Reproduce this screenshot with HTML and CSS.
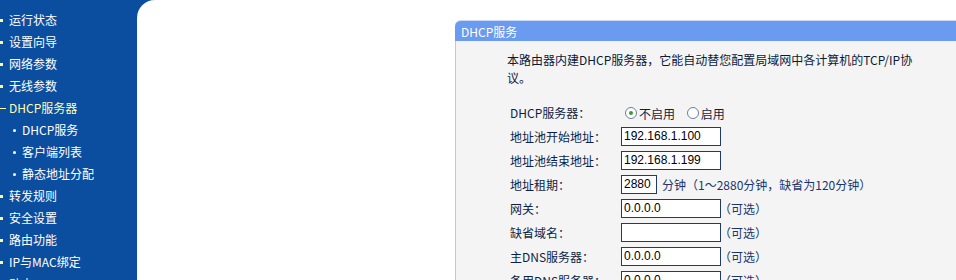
FILE: index.html
```html
<!DOCTYPE html>
<html lang="zh-CN">
<head>
  <meta charset="UTF-8">
  <title>DHCP服务</title>
  <link rel="stylesheet" href="styles.css">
</head>
<body>
  <div class="layout">
    <ul class="menu">
      <li class="item">运行状态</li>
      <li class="item">设置向导</li>
      <li class="item">网络参数</li>
      <li class="item">无线参数</li>
      <li class="item open">DHCP服务器</li>
      <li class="sub">DHCP服务</li>
      <li class="sub">客户端列表</li>
      <li class="sub">静态地址分配</li>
      <li class="item">转发规则</li>
      <li class="item">安全设置</li>
      <li class="item">路由功能</li>
      <li class="item">IP与MAC绑定</li>
      <li class="item">动态DNS</li>
    </ul>

    <div class="main">
      <div class="panel">
        <div class="panel-head">DHCP服务</div>
        <div class="panel-body">
          <p class="intro">本路由器内建DHCP服务器，它能自动替您配置局域网中各计算机的TCP/IP协<br>议。</p>
          <table class="form">
            <tr>
              <td class="label">DHCP服务器：</td>
              <td>
                <span class="radio checked"></span><span class="opt">不启用</span>
                <span class="radio"></span><span class="opt">启用</span>
              </td>
            </tr>
            <tr>
              <td class="label">地址池开始地址：</td>
              <td><span class="field">192.168.1.100</span></td>
            </tr>
            <tr>
              <td class="label">地址池结束地址：</td>
              <td><span class="field">192.168.1.199</span></td>
            </tr>
            <tr>
              <td class="label">地址租期：</td>
              <td><span class="field short">2880</span><span class="hint wide">分钟（1～2880分钟，缺省为120分钟）</span></td>
            </tr>
            <tr>
              <td class="label">网关：</td>
              <td><span class="field">0.0.0.0</span><span class="hint">（可选）</span></td>
            </tr>
            <tr>
              <td class="label">缺省域名：</td>
              <td><span class="field"></span><span class="hint">（可选）</span></td>
            </tr>
            <tr>
              <td class="label">主DNS服务器：</td>
              <td><span class="field">0.0.0.0</span><span class="hint">（可选）</span></td>
            </tr>
            <tr>
              <td class="label">备用DNS服务器：</td>
              <td><span class="field">0.0.0.0</span><span class="hint">（可选）</span></td>
            </tr>
          </table>
        </div>
      </div>
    </div>
  </div>
</body>
</html>
```

FILE: styles.css
```css
* { box-sizing:border-box; margin:0; padding:0 }
html, body { height:100%; overflow:hidden; }
body {
  font-family: "Noto Sans CJK SC", "Liberation Sans", sans-serif;
  font-size: 12px;
  background: #0b4e9f;
}

.layout {
  display:flex;
  height:100%;
}

/* left menu */
.menu {
  list-style:none;
  width:137px;
  flex:none;
  padding-top:9px;
}
.menu li {
  position:relative;
  height:22px;
  line-height:22px;
  color:#fff;
  white-space:nowrap;
}
.menu .item { padding-left:9px; }
.menu .item::before {
  content:'';
  position:absolute;
  left:0; top:10px;
  width:3px; height:3px;
  background:#ffff99;
}
.menu .open { color:#ffffb4; }
.menu .open::before {
  top:11px; width:6px; height:1px;
}
.menu .sub { padding-left:22px; }
.menu .sub::before {
  content:'';
  position:absolute;
  left:13px; top:10px;
  width:3px; height:3px;
  border-radius:50%;
  background:#fff;
}

/* main area */
.main {
  flex:1;
  background:#fff;
  border-top-left-radius:18px;
  padding:20px 0 0 318px;
}
.panel {
  height:100%;
  display:flex;
  flex-direction:column;
}
.panel-head {
  height:21px;
  line-height:21px;
  padding-left:6px;
  background:#6a9bf1;
  color:#fff;
  border-top-left-radius:6px;
  border-top:1px solid #c9d9f7;
}
.panel-body {
  flex:1;
  background:#f4f4f4;
  border-left:1px solid #e4c48e;
  padding:10px 0 0 51px;
}
.intro {
  line-height:18px;
  color:#0a1a3a;
  margin-bottom:13px;
}

/* form */
.form {
  border-collapse:collapse;
  color:#0e1f45;
}
.form td {
  height:24px;
  padding:0;
  vertical-align:middle;
  white-space:nowrap;
}
.form .label {
  width:114px;
  padding-left:3px;
}
.field {
  display:inline-block;
  vertical-align:middle;
  width:100px;
  height:19px;
  line-height:17px;
  padding-left:2px;
  background:#fff;
  border:1px solid #223b66;
  font-family:"Liberation Sans", sans-serif;
  font-size:12px;
  color:#000;
}
.field.short { width:36px; }
.hint {
  display:inline-block;
  vertical-align:middle;
  margin-left:-2px;
  color:#1a3570;
}
.hint.wide { margin-left:5px; }

.radio {
  display:inline-block;
  vertical-align:middle;
  width:12px; height:12px;
  margin:0 2px 0 4px;
  border:1px solid #6f7f97;
  border-radius:50%;
  background:#fff;
  position:relative;
}
.radio.checked::after {
  content:'';
  position:absolute;
  left:3px; top:3px;
  width:4px; height:4px;
  border-radius:50%;
  background:#3c9a3c;
}
.opt {
  display:inline-block;
  vertical-align:middle;
  margin-right:5px;
}
```
